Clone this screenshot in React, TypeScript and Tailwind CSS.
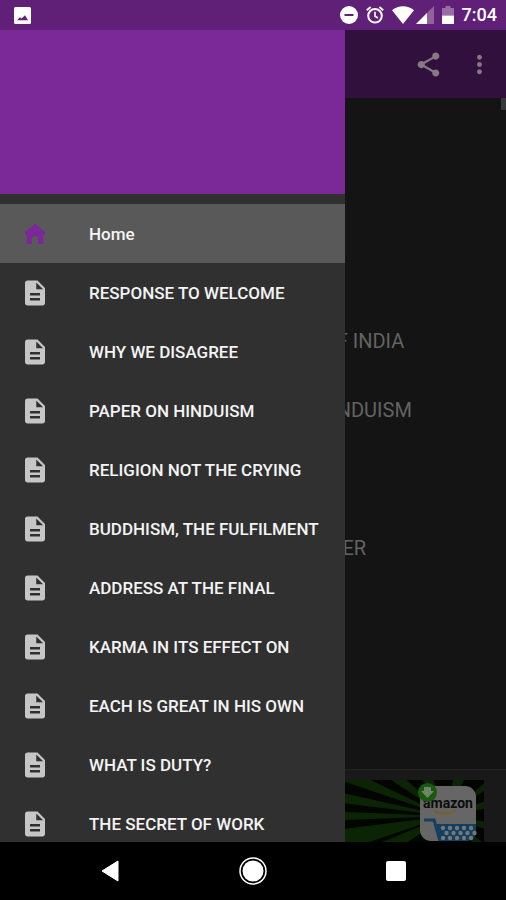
import { MdDescription, MdMoreVert, MdShare } from "react-icons/md";

const chapters = [
  "RESPONSE TO WELCOME",
  "WHY WE DISAGREE",
  "PAPER ON HINDUISM",
  "RELIGION NOT THE CRYING",
  "BUDDHISM, THE FULFILMENT",
  "ADDRESS AT THE FINAL",
  "KARMA IN ITS EFFECT ON",
  "EACH IS GREAT IN HIS OWN",
  "WHAT IS DUTY?",
  "THE SECRET OF WORK",
];

// One entry per 69px row; rows whose title ends under the drawer stay empty.
const rows = [
  { title: "", indent: "" },
  { title: "", indent: "" },
  { title: "", indent: "" },
  { title: "OF INDIA", indent: "pl-[323px]" },
  { title: "HINDUISM", indent: "pl-[317px]" },
  { title: "", indent: "" },
  { title: "CHARACTER", indent: "pl-[252px]" },
];

function StatusBar() {
  return (
    <header className="flex h-[30px] shrink-0 items-center bg-[#602078] pr-[9px] pl-3.5 text-white">
      <svg viewBox="0 0 17 17" className="size-[17px]" aria-hidden="true">
        <rect width="17" height="17" rx="1.5" fill="#fff" />
        <path d="M3 13.2 6 10.2l1.6 1.3L11 8.2l3 5z" fill="#602078" />
      </svg>
      <div className="ml-auto flex items-center">
        <svg viewBox="0 0 18 18" className="size-[18px]" aria-hidden="true">
          <circle cx="9" cy="9" r="9" fill="#fff" />
          <path d="M4.5 9h9" stroke="#602078" strokeWidth="2" />
        </svg>
        <svg viewBox="0 0 18 18" className="ml-2 size-[18px]" fill="none" stroke="#fff" aria-hidden="true">
          <circle cx="9" cy="9.8" r="6.8" strokeWidth="2" />
          <path d="M9 5.8v4.4l3 1.8" strokeWidth="1.6" />
          <path d="M.8 4.2 4.6 1M17.2 4.2 13.4 1" strokeWidth="1.8" />
        </svg>
        <svg viewBox="0 0 22 18" className="ml-2 h-[18px] w-[22px]" aria-hidden="true">
          <path d="M0 4.3C6.4-1.2 15.6-1.2 22 4.3L11 18z" fill="#fff" />
        </svg>
        <svg viewBox="0 0 18 18" className="ml-0.5 size-[18px]" aria-hidden="true">
          <path d="M18 0v18H0z" fill="#fff" fillOpacity=".3" />
          <path d="M11 7v11H0z" fill="#fff" />
        </svg>
        <svg viewBox="0 0 12 18" className="ml-2 h-[18px] w-3" aria-hidden="true">
          <path d="M3.5 0h5v2H12v7.5H0V2h3.5z" fill="#fff" fillOpacity=".35" />
          <path d="M0 9.5h12V18H0z" fill="#fff" />
        </svg>
        <time className="ml-2 text-lg font-medium">7:04</time>
      </div>
    </header>
  );
}

function AdBanner() {
  return (
    <a href="#ad" aria-label="Amazon shopping" className="mx-auto block h-[62px] w-[462px] max-w-full overflow-hidden">
      <svg viewBox="0 0 462 62" className="h-[62px] w-[462px]">
        <rect width="462" height="62" fill="#020502" />
        <g fill="#0b2404">
          <path d="M424 36 200-14 200 8zM424 36 300-6h36zM424 36 180 26v20zM424 36 250 58v20h50zM424 36 350 66h30zM424 36 360-6h18zM424 36 398-4h12zM424 36 432-4h12zM424 36 466 0v8zM424 36 466 20v8zM424 36 466 42v8zM424 36 454 66h12z" />
        </g>
        <rect x="398" y="6" width="56" height="55" rx="11" fill="#666" />
        <text x="426" y="28" textAnchor="middle" fontSize="14" fontWeight="700" fill="#0c0c0c" fontFamily="Roboto, sans-serif">amazon</text>
        <path d="M412 31q11 5 21 0" stroke="#79602c" strokeWidth="2" fill="none" />
        <path d="M414 44h40v6q0 11-11 11h-24z" fill="#153f60" />
        <path d="M402 40h10l6 21" stroke="#153f60" strokeWidth="3" fill="none" />
        <g fill="#747878">
          {[0, 1, 2].map((r) =>
            [0, 1, 2, 3, 4].map((c) => (
              <circle key={`${r}-${c}`} cx={421 + c * 7 + (r % 2) * 3.5} cy={48 + r * 5} r="2.200" />
            )),
          )}
        </g>
        <circle cx="405.500" cy="12.500" r="9.500" fill="#19580d" />
        <path d="M402 7h7v4h3l-6.500 7-6.500-7h3z" fill="#70836b" />
      </svg>
    </a>
  );
}

function Reader() {
  return (
    <main className="flex h-full flex-col bg-[#141414]">
      <div className="flex h-[68px] shrink-0 items-center justify-end bg-[#32103e] pr-3 text-[#837a83]">
        <button aria-label="Share" className="mr-[22px]">
          <MdShare size={29} />
        </button>
        <button aria-label="More options">
          <MdMoreVert size={29} />
        </button>
      </div>
      <div className="flex min-h-0 flex-1 items-start overflow-hidden">
        <ul className="min-w-0 flex-1 pt-px">
          {rows.map((row, i) => (
            <li
              key={i}
              className={`flex h-[69px] items-center text-xl leading-5 whitespace-nowrap text-[#636363] ${row.indent}`}
            >
              {row.title}
            </li>
          ))}
        </ul>
        <div className="h-3 w-[5px] bg-[#383838]" />
      </div>
      <div className="shrink-0 border-t border-[#242424] bg-[#191919] pt-2.5">
        <AdBanner />
      </div>
    </main>
  );
}

function Drawer() {
  return (
    <aside className="absolute inset-y-0 left-0 flex w-[345px] max-w-[85%] flex-col overflow-hidden bg-[#303030]">
      <div className="h-[164px] shrink-0 bg-[#7b2898]" />
      <nav className="pt-2.5 text-[17px] leading-5 font-medium text-[#f4f4f4]">
        <a href="#home" className="flex h-[59px] items-center gap-[39px] bg-[#595959] px-5">
          <svg viewBox="0 0 30 30" className="size-[30px] shrink-0" fill="#7b2898" aria-hidden="true">
            <path d="M14.200 5.200q.8-.6 1.600 0L25 13v2.500h-1.500V24q0 1-1 1H18v-5q0-3-3-3t-3 3v5H7.500q-1 0-1-1v-8.500H5V13z" />
          </svg>
          Home
        </a>
        {chapters.map((title) => (
          <a key={title} href="#chapter" className="flex h-[59px] items-center gap-[39px] px-5 whitespace-nowrap">
            <MdDescription size={30} className="shrink-0 text-[#c6c6c6]" />
            {title}
          </a>
        ))}
      </nav>
    </aside>
  );
}

function SystemNav() {
  return (
    <footer className="flex h-[58px] shrink-0 justify-center bg-black">
      <button aria-label="Back" className="flex w-[143px] items-center justify-center">
        <svg viewBox="0 0 18 22" className="h-[22px] w-[18px]">
          <path d="M17 1v20L1 11z" fill="#fff" stroke="#fff" strokeLinejoin="round" />
        </svg>
      </button>
      <button aria-label="Home" className="flex w-[143px] items-center justify-center">
        <svg viewBox="0 0 28 28" className="size-7">
          <circle cx="14" cy="14" r="13" fill="none" stroke="#fff" strokeWidth="1.500" />
          <circle cx="14" cy="14" r="10.500" fill="#fff" />
        </svg>
      </button>
      <button aria-label="Recent apps" className="flex w-[143px] items-center justify-center">
        <span className="size-5 rounded-xs bg-white" />
      </button>
    </footer>
  );
}

export default function App() {
  return (
    <div className="flex h-screen flex-col overflow-hidden font-['Roboto',sans-serif]">
      <StatusBar />
      <div className="relative min-h-0 flex-1">
        <Reader />
        <Drawer />
      </div>
      <SystemNav />
    </div>
  );
}
